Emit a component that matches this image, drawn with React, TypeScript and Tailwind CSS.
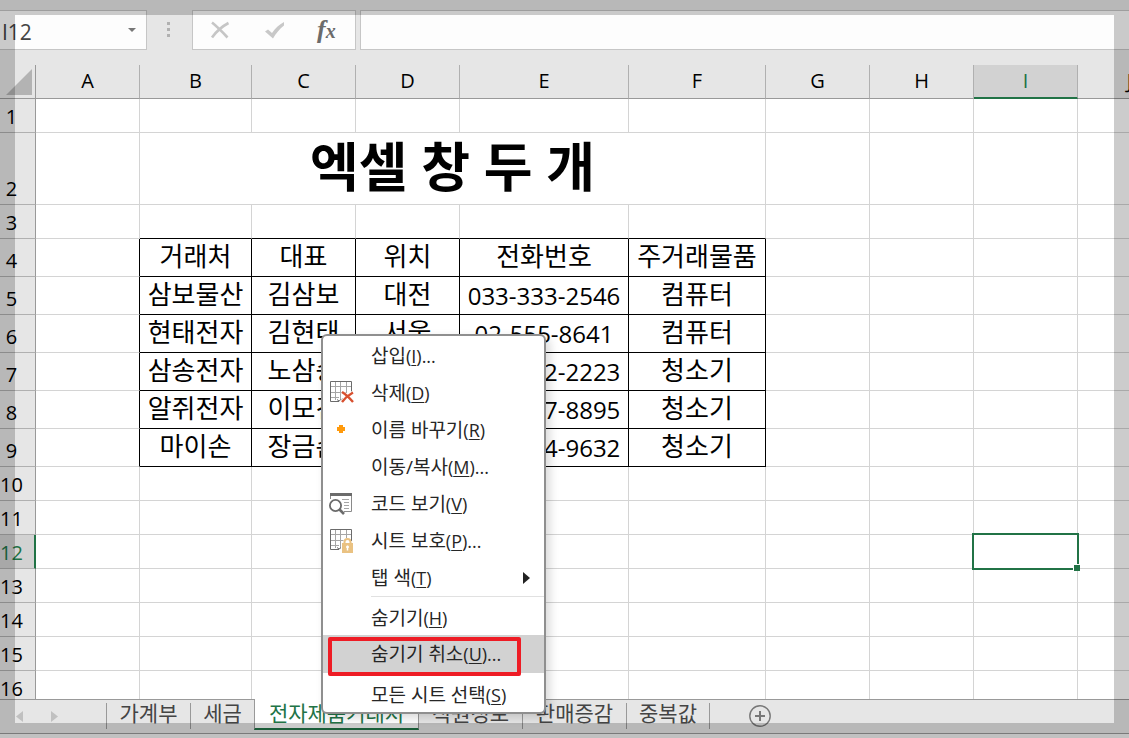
import React from "react";

const letters = ["A", "B", "C", "D", "E", "F", "G", "H", "I", "J"];

const records: Record<number, string[]> = {
  4: ["거래처", "대표", "위치", "전화번호", "주거래물품"],
  5: ["삼보물산", "김삼보", "대전", "033-333-2546", "컴퓨터"],
  6: ["현태전자", "김현태", "서울", "02-555-8641", "컴퓨터"],
  7: ["삼송전자", "노삼송", "부산", "051-222-2223", "청소기"],
  8: ["알쥐전자", "이모건", "인천", "032-777-8895", "청소기"],
  9: ["마이손", "장금손", "대구", "053-444-9632", "청소기"],
};

const rows = Array.from({ length: 16 }, (_, i) => i + 1);

function rowHeight(n: number) {
  if (n === 2) return "h-[72px]";
  if (n >= 4 && n <= 9) return "h-[38px]";
  return "h-[34px]";
}

function SheetRow({ n }: { n: number }) {
  const data = records[n];
  const active = n === 12;
  return (
    <tr className={rowHeight(n)}>
      <th
        scope="row"
        className={
          "border-b p-0 pr-3 text-center align-bottom text-xl leading-[30px] font-normal " +
          (active
            ? "border-r-2 border-b-[#b0b0b0] border-r-[#217346] bg-[#d2d2d2] text-[#217346]"
            : "border-r border-b-[#b0b0b0] border-r-[#999] bg-[#e6e6e6] text-black")
        }
      >
        {n}
      </th>
      {letters.map((letter, i) => {
        if (n === 2 && i > 1 && i < 6) return null;
        if (n === 2 && i === 1)
          return (
            <td
              key={letter}
              colSpan={5}
              className="border-r border-b border-[#d4d4d4] p-0 pb-1 text-center align-middle text-[53px] leading-[64px] font-bold"
            >
              엑셀 창 두 개
            </td>
          );
        if (data && i > 0 && i < 6)
          return (
            <td
              key={letter}
              className={
                "border-r border-b border-black p-0 text-center whitespace-nowrap " +
                (i === 4 && n > 4 ? "align-middle text-2xl leading-9" : "align-top text-[26px] leading-[34px]")
              }
            >
              {data[i - 1]}
            </td>
          );
        const blackBottom = n === 3 && i > 0 && i < 6;
        const blackRight = data && i === 0;
        const selected = active && letter === "I";
        return (
          <td
            key={letter}
            className={
              "border-r border-b p-0 " +
              (selected ? "relative " : "") +
              (blackBottom ? "border-b-black " : "border-b-[#d4d4d4] ") +
              (blackRight ? "border-r-black" : "border-r-[#d4d4d4]")
            }
          >
            {selected && (
              <span className="absolute -inset-[2px] border-2 border-[#217346]">
                <span className="absolute -right-[3px] -bottom-[3px] size-[7px] border-t border-l border-white bg-[#217346]" />
              </span>
            )}
          </td>
        );
      })}
    </tr>
  );
}

function SheetGlyph() {
  return (
    <g fill="none">
      <path d="M6.500 1v18M11.500 1v18M17.500 1v10M2 5.500h20M2 11.500h16M2 16.500h8" stroke="#a6a6a6" />
      <path d="M10 20.500H1.500V.5h21V12" stroke="#6b6b6b" />
      <path d="M8 18.500l2 1.500 4-2.500" stroke="#6b6b6b" />
    </g>
  );
}

function DeleteIcon() {
  return (
    <svg width="25" height="24" viewBox="0 0 25 24">
      <SheetGlyph />
      <path d="M13 11l11 10M23.500 11.500L12.500 21" stroke="#fff" strokeWidth="4" />
      <path d="M13 11c4 2.500 7.500 6 11 10M24 11.500c-4.500 2.500-8 5.500-11 9.500" fill="none" stroke="#d8502f" strokeWidth="2.400" />
    </svg>
  );
}

function RenameIcon() {
  return (
    <svg width="25" height="24" viewBox="0 0 25 24">
      <path d="M10 7h4v2h2v4h-2v2h-4v-2H8V9h2z" fill="#ff9a0c" />
    </svg>
  );
}

function CodeIcon() {
  return (
    <svg width="25" height="24" viewBox="0 0 25 24" fill="none">
      <path d="M1.500 7V1.500h21v18H15" stroke="#8a8a8a" />
      <path d="M1 1h22v3H1z" fill="#6b6b6b" />
      <path d="M13 7.500h7M15 10.500h5M15 13.500h5M15 16.500h5" stroke="#a6a6a6" />
      <circle cx="6.500" cy="13.500" r="5.600" fill="#fff" stroke="#6b6b6b" strokeWidth="1.800" />
      <path d="M10.500 17.500l4.500 4.500" stroke="#6b6b6b" strokeWidth="2.600" />
    </svg>
  );
}

function ProtectIcon() {
  return (
    <svg width="25" height="24" viewBox="0 0 25 24" fill="none">
      <SheetGlyph />
      <path d="M12 12h2.500V9H22v3h3v12H12z" fill="#fff" />
      <path d="M15.500 15v-2a3 3 0 0 1 6 0v2" stroke="#eac282" strokeWidth="2" />
      <path d="M13 14h11v10H13z" fill="#eac282" />
      <path d="M18.500 16.500v5M17 18h3" stroke="#fff" strokeWidth="1.500" />
    </svg>
  );
}

type Item = { label: string; hotkey: string; tail?: string; icon?: React.ReactNode; submenu?: boolean };

const topItems: Item[] = [
  { label: "삽입", hotkey: "I", tail: "..." },
  { label: "삭제", hotkey: "D", icon: <DeleteIcon /> },
  { label: "이름 바꾸기", hotkey: "R", icon: <RenameIcon /> },
  { label: "이동/복사", hotkey: "M", tail: "..." },
  { label: "코드 보기", hotkey: "V", icon: <CodeIcon /> },
  { label: "시트 보호", hotkey: "P", tail: "...", icon: <ProtectIcon /> },
  { label: "탭 색", hotkey: "T", submenu: true },
];

function MenuItem({ item, className = "h-[37px]" }: { item: Item; className?: string }) {
  return (
    <button role="menuitem" className={"flex w-full items-center pr-[14px] pl-[6px] text-left " + className}>
      <span className="w-[42px]">{item.icon}</span>
      <span className="flex-1 whitespace-nowrap">
        {item.label}
        <span className="text-lg">
          (<u className="underline-offset-2">{item.hotkey}</u>){item.tail}
        </span>
      </span>
      {item.submenu && (
        <svg width="7" height="12" viewBox="0 0 7 12">
          <path d="M0 0l7 6-7 6z" fill="#222" />
        </svg>
      )}
    </button>
  );
}

function ContextMenu() {
  return (
    <div
      role="menu"
      className="absolute top-[334px] left-[321px] w-[225px] rounded-md border-2 border-[#8f8f8f] bg-white pt-px text-[19px] leading-7 text-[#262626] shadow-[4px_4px_10px_rgba(0,0,0,0.15)]"
    >
      {topItems.map((item) => (
        <MenuItem key={item.hotkey} item={item} />
      ))}
      <hr className="ml-12 border-[#e1e1e1]" />
      <MenuItem item={{ label: "숨기기", hotkey: "H" }} className="h-[38px] pt-1" />
      <div className="relative">
        <MenuItem item={{ label: "숨기기 취소", hotkey: "U", tail: "..." }} className="h-[38px] bg-[#d2d2d2]" />
        <span className="pointer-events-none absolute top-[2px] -bottom-[3px] left-[5px] w-[193px] rounded-[2px] border-4 border-[#ee1c25]" />
      </div>
      <MenuItem item={{ label: "모든 시트 선택", hotkey: "S" }} className="h-[39px] pt-1" />
    </div>
  );
}

function FormulaBar() {
  return (
    <div className="flex h-[65px] shrink-0 items-start pt-[10px]">
      <label className="flex h-10 w-[147px] items-center border border-l-0 border-[#c6c6c6] bg-[#fdfdfd]">
        <input aria-label="이름 상자" defaultValue="I12" className="h-full w-[120px] bg-transparent pt-[3px] pl-[2px] text-[21px] text-[#444] outline-none" />
        <svg className="ml-2" width="8" height="4" viewBox="0 0 8 4">
          <path d="M0 0h8L4 4z" fill="#777" />
        </svg>
      </label>
      <svg className="mt-3 ml-5" width="3" height="15" viewBox="0 0 3 15">
        <path d="M0 0h3v3H0zM0 6h3v3H0zM0 12h3v3H0z" fill="#b1b1b1" />
      </svg>
      <div className="ml-[22px] flex h-10 w-[164px] items-center border border-[#c6c6c6] bg-[#fdfdfd] pl-[17px]">
        <button aria-label="취소">
          <svg width="20" height="18" viewBox="0 0 20 18" fill="none" stroke="#c6c6c6" strokeWidth="2.600">
            <path d="M2 1.500c5 4 10 9 15.500 15M18.500 2C12 5.500 6.500 10 2 16.500" />
          </svg>
        </button>
        <button aria-label="입력" className="ml-[34px]">
          <svg width="21" height="18" viewBox="0 0 21 18" fill="#c8c8c8">
            <path d="M1 10.500L4 8.500l4 3.500C11 7.500 15 3.500 20 1v3.500C15.500 8 12 12.500 9 17.500z" />
          </svg>
        </button>
        <button
          aria-label="함수 삽입"
          className="ml-8 flex items-baseline font-['Liberation_Serif',serif] text-[26px] leading-8 font-bold text-[#6b6b6b] italic"
        >
          f<span className="text-xl">x</span>
        </button>
      </div>
      <input aria-label="수식 입력줄" className="ml-1 h-10 min-w-0 flex-1 border border-r-0 border-[#c6c6c6] bg-[#fdfdfd] outline-none" />
    </div>
  );
}

function Tab({ label, className }: { label: string; className: string }) {
  return (
    <button role="tab" className={"mt-[3px] h-[26px] border-r border-[#999] pb-[6px] whitespace-nowrap " + className}>
      {label}
    </button>
  );
}

function TabBar() {
  return (
    <div className="flex h-[35px] shrink-0 items-start border-t border-b border-[#999] text-[21px] leading-5 text-[#444]">
      <div className="mt-[3px] flex h-[26px] w-[107px] items-center gap-7 border-r border-[#999] pl-4">
        <button aria-label="이전 시트">
          <svg width="7" height="11" viewBox="0 0 7 11"><path d="M7 0v11L0 5.500z" fill="#c0c0c0" /></svg>
        </button>
        <button aria-label="다음 시트">
          <svg width="7" height="11" viewBox="0 0 7 11"><path d="M0 0v11l7-5.500z" fill="#c0c0c0" /></svg>
        </button>
      </div>
      <Tab label="가계부" className="w-[84px]" />
      <Tab label="세금" className="w-[63px] border-r-0" />
      <button role="tab" aria-selected="true" className="-mt-px h-[31px] w-[165px] border-r border-b-2 border-l border-[#999] border-b-[#217346] bg-white pb-[2px] whitespace-nowrap text-[#217346]">
        전자제품거래처
      </button>
      <Tab label="직원정보" className="w-[104px]" />
      <Tab label="판매증감" className="w-[104px]" />
      <Tab label="중복값" className="w-[83px]" />
      <button aria-label="새 시트" className="mt-[5px] ml-[39px]">
        <svg width="22" height="22" viewBox="0 0 22 22" fill="none" stroke="#777">
          <circle cx="11" cy="11" r="10.200" strokeWidth="1.400" />
          <path d="M11 6v10M6 11h10" strokeWidth="2" />
        </svg>
      </button>
    </div>
  );
}

export default function App() {
  return (
    <div className="relative flex h-screen flex-col overflow-hidden bg-[#e6e6e6] font-['Open_Sans','Noto_Sans_CJK_KR',sans-serif] text-black">
      <FormulaBar />
      <main className="min-h-0 flex-1 overflow-hidden bg-white">
        <table className="w-[1182px] table-fixed border-separate border-spacing-0">
          <colgroup>
            <col className="w-[36px]" />
            <col className="w-[104px]" />
            <col className="w-[112px]" />
            <col className="w-[104px]" />
            <col className="w-[104px]" />
            <col className="w-[169px]" />
            <col className="w-[137px]" />
            <col className="w-[104px]" />
            <col className="w-[104px]" />
            <col className="w-[104px]" />
            <col className="w-[104px]" />
          </colgroup>
          <thead>
            <tr className="h-[34px]">
              <th className="border-r border-b border-[#999] bg-[#e6e6e6] p-0">
                <svg className="ml-[6px]" width="26" height="26" viewBox="0 0 26 26">
                  <path d="M26 0v26H0z" fill="#b3b3b3" />
                </svg>
              </th>
              {letters.map((letter) => (
                <th
                  key={letter}
                  scope="col"
                  className={
                    "border-r p-0 text-center align-top text-xl leading-8 font-normal " +
                    (letter === "I"
                      ? "border-b-2 border-r-[#b0b0b0] border-b-[#217346] bg-[#d2d2d2] text-[#217346]"
                      : "border-b border-r-[#b0b0b0] border-b-[#999] bg-[#e6e6e6]")
                  }
                >
                  {letter}
                </th>
              ))}
            </tr>
          </thead>
          <tbody>
            {rows.map((n) => (
              <SheetRow key={n} n={n} />
            ))}
          </tbody>
        </table>
      </main>
      <TabBar />
      <div className="h-1 shrink-0 bg-[#f2f2f2]" />
      <ContextMenu />
      <div className="pointer-events-none absolute inset-0 border-[15px] border-black/20" />
    </div>
  );
}
